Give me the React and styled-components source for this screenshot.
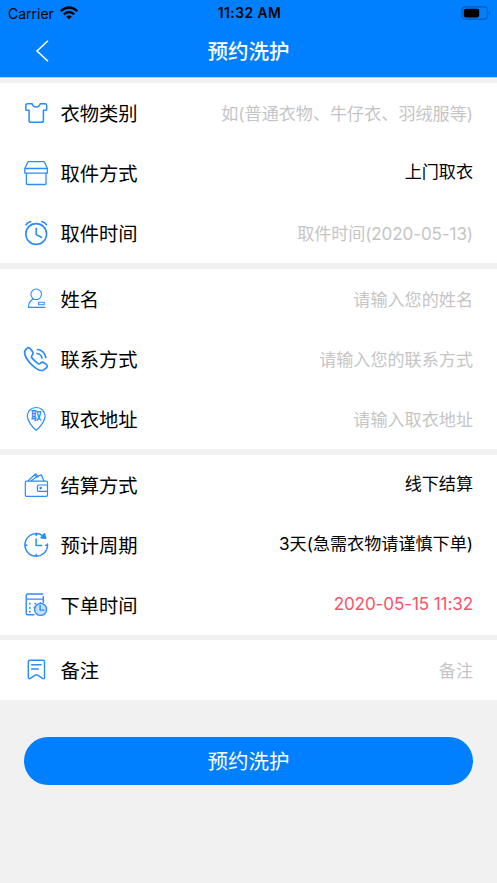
import React from "react";
import styled, { createGlobalStyle } from "styled-components";

const GlobalStyle = createGlobalStyle`
  * { box-sizing: border-box; }
  body {
    margin: 0;
    background: #f1f1f1;
    font-family: Inter, "Noto Sans CJK SC", sans-serif;
    color: #000;
  }
`;

const Screen = styled.main`
  display: flex;
  flex-direction: column;
  width: 497px;
  height: 883px;
  background: #f1f1f1;
  overflow: hidden;
`;

const Header = styled.header`
  display: flex;
  flex-direction: column;
  height: 78px;
  background: #0080ff;
  border-bottom: 1px solid #b9cfe6;
`;

const StatusBar = styled.div`
  display: grid;
  grid-template-columns: 1fr auto 1fr;
  align-items: center;
  height: 25px;
  padding: 0 6px 0 8px;
`;

const Carrier = styled.div`
  display: flex;
  align-items: center;
  gap: 6px;
  font-size: 14px;
  line-height: 25px;
`;

const Clock = styled.div`
  padding-top: 1px;
  font-size: 13.8px;
  font-weight: 600;
  line-height: 25px;
  letter-spacing: 0.5px;
`;

const Battery = styled.svg`
  justify-self: end;
`;

const NavBar = styled.div`
  display: grid;
  grid-template-columns: 80px 1fr 80px;
  align-items: center;
  height: 52px;
`;

const BackButton = styled.button`
  display: flex;
  padding: 0 0 0 35px;
  border: 0;
  background: none;
`;

const Title = styled.h1`
  margin: 0;
  padding-top: 2px;
  color: #fff;
  font-size: 20.5px;
  font-weight: 500;
  line-height: 50px;
  text-align: center;
`;

const Form = styled.form`
  display: flex;
  flex-direction: column;
  gap: 5.9px;
  padding-top: 5px;
`;

const Group = styled.section`
  background: #fff;
`;

const Row = styled.label`
  display: flex;
  align-items: center;
  height: 59.98px;
  padding: 0 24px;
`;

const Icon = styled.svg`
  width: 24px;
  height: 24px;
  flex: none;
  fill: none;
  stroke: #2b8cfb;
  stroke-width: ${(p) => p.$weight || 1.35};
  stroke-linecap: round;
  stroke-linejoin: round;
  overflow: visible;
`;

const PinText = styled.text`
  fill: #2b8cfb;
  stroke: none;
  font: 700 11px "Noto Sans CJK SC", sans-serif;
`;

const Label = styled.span`
  margin-left: 12.5px;
  padding-top: 2px;
  font-size: 19.3px;
  line-height: 28px;
`;

const tones = { hint: "#c5c5c5", plain: "#000", alert: "#fb5266" };

const Value = styled.span`
  margin-left: auto;
  color: ${(p) => tones[p.$tone]};
  font-size: 17.1px;
  line-height: 26px;
  letter-spacing: ${(p) => (p.$numeric ? "-0.12px" : "0")};
  padding-top: ${(p) => (p.$tone === "hint" ? 2 : 0)}px;
  padding-bottom: ${(p) => (p.$tone === "hint" ? 0 : 1)}px;
  white-space: nowrap;
`;

const Submit = styled.button`
  height: 48px;
  margin: 30.3px 24px 0;
  padding: 2px 0 0;
  border: 0;
  border-radius: 24px;
  background: #0080ff;
  color: #fff;
  font: 400 20.5px/46px Inter, "Noto Sans CJK SC", sans-serif;
`;

const icons = {
  shirt: (
    <Icon $weight={1.5}>
      <path d="M3.2 2.7H8.2C9 7.1 15.3 7.1 16.2 2.7H21Q22.7 2.7 22.7 4.4V8.4Q22.7 9.2 21.7 9.2H19.4V19.4Q19.4 21.3 17.5 21.3H7Q5.1 21.3 5.1 19.4V9.2H2.8Q1.8 9.2 1.8 8.4V4.4Q1.8 2.7 3.2 2.7Z" />
    </Icon>
  ),
  shop: (
    <Icon $weight={1.3}>
      <path d="M5.2.6H19.2Q20.2.6 20.6 1.5L23.4 7.5V12.2H.8V7.5L3.6 1.5Q4 .6 5.2.6ZM.8 7.5H23.4M2.4 12.2V22.5Q2.4 23.5 3.4 23.5H21Q22 23.5 22 22.5V12.2" />
    </Icon>
  ),
  alarm: (
    <Icon $weight={1.6}>
      <circle cx="12.2" cy="13" r="10.4" />
      <path d="M12.2 7.4V13.6L17.4 16.3M2 3.7Q3.8 1.3 6.7.5M22.5 3.7Q20.7 1.3 17.8.5" />
    </Icon>
  ),
  person: (
    <Icon $weight={1.1}>
      <circle cx="12.2" cy="7.3" r="5.3" />
      <path d="M9.2 12Q4.4 14.5 4.4 20.4H21M14.6 15.3H20.2V17.8H14.6Z" />
    </Icon>
  ),
  phone: (
    <Icon $weight={1.7}>
      <path d="M4.5.7C3.4.5.5 3.1.6 5.6C.8 9.2 4 14.4 8.7 18.6C12.2 21.9 16.3 24.3 19.1 23.2C21.1 22.5 23.5 20 23.3 18.9C23.1 17.6 20 15.4 18.4 15.2C17 15.1 16 17.2 14.8 17C13.5 16.7 7.8 11.5 7.5 10C7.2 8.7 9.2 7.6 9.1 6.2C8.9 4.4 6 .9 4.5.7ZM13.5 2.5Q20.2 3.2 21.8 10.5M13 6.5Q17.1 7.1 18 11" />
    </Icon>
  ),
  pin: (
    <Icon $weight={1.2}>
      <path d="M12.2.5C7.1.5 3.3 4.3 3.3 9.1C3.3 14.1 8.4 20.2 12.2 23.3C16 20.2 21.1 14.1 21.1 9.1C21.1 4.3 17.3.5 12.2.5Z" />
      <PinText x="12.2" y="13.2" textAnchor="middle">取</PinText>
    </Icon>
  ),
  wallet: (
    <Icon $weight={1.2}>
      <rect x="1.3" y="8.2" width="22.2" height="15.2" rx="1.3" />
      <path d="M4.2 7.8L11.7.8L14.2 3.5M7.5 7.8L12.8 3.6L17.4 1.8L19.7 7.8M10.7 1.9L13 4.3M23.5 12H14.5Q13.4 12 13.4 13V17.3Q13.4 18.3 14.5 18.3H23.5" />
      <circle cx="16.7" cy="15.1" r=".7" fill="#2b8cfb" />
    </Icon>
  ),
  cycle: (
    <Icon $weight={1.5}>
      <path d="M18.6 2.6A11.3 11.3 0 1 0 23.5 11.1M12.1 6V12.5H17.6M12.2 1V2.4M12.2 21.6V23M1.1 12.3H3M21.6 12.3H23.3" />
      <path d="M20.4.7L17 4.7L21.8 5.2Z" fill="#2b8cfb" />
    </Icon>
  ),
  order: (
    <Icon $weight={1.4}>
      <path d="M18.8 1H3.7Q2.2 1 2.2 2.5V20.2Q2.2 21.8 3.7 21.8H10M2.2 6.1H19.3M19.3 3.5V9.5" />
      <path d="M5.8 10.7H6M11.2 10.7H11.4M16.3 10.1H16.5M5.8 14.9H6M10.3 14.4H10.5M5.8 18.7H6" strokeWidth="1.7" />
      <circle cx="16.6" cy="16.4" r="6" fill="#c4dffd" />
      <path d="M16.1 12.4V17.1H20.1" />
    </Icon>
  ),
  note: (
    <Icon $weight={1.4}>
      <path d="M5.8 2.3H19Q20.5 2.3 20.5 3.8V19.3C20.5 20.7 19.5 21.1 18.4 20.3L13.7 17.2Q12.4 16.4 11.1 17.2L6.4 20.3C5.3 21.1 4.3 20.7 4.3 19.3V3.8Q4.3 2.3 5.8 2.3ZM7.6 6.8H17.1M7.6 11H14.4" />
    </Icon>
  ),
};

const groups = [
  [
    { icon: "shirt", label: "衣物类别", value: "如(普通衣物、牛仔衣、羽绒服等)", tone: "hint" },
    { icon: "shop", label: "取件方式", value: "上门取衣", tone: "plain" },
    { icon: "alarm", label: "取件时间", value: "取件时间(2020-05-13)", tone: "hint", numeric: true },
  ],
  [
    { icon: "person", label: "姓名", value: "请输入您的姓名", tone: "hint" },
    { icon: "phone", label: "联系方式", value: "请输入您的联系方式", tone: "hint" },
    { icon: "pin", label: "取衣地址", value: "请输入取衣地址", tone: "hint" },
  ],
  [
    { icon: "wallet", label: "结算方式", value: "线下结算", tone: "plain" },
    { icon: "cycle", label: "预计周期", value: "3天(急需衣物请谨慎下单)", tone: "plain" },
    { icon: "order", label: "下单时间", value: "2020-05-15 11:32", tone: "alert", numeric: true },
  ],
  [{ icon: "note", label: "备注", value: "备注", tone: "hint" }],
];

export default function App() {
  return (
    <>
      <GlobalStyle />
      <Screen>
        <Header>
          <StatusBar>
            <Carrier>
              Carrier
              <svg width="18" height="14" viewBox="0 0 18 14" fill="none" stroke="#000" strokeWidth="2.3">
                <path d="M.8 5.1Q9-2 17.2 5.1M3.8 8.3Q9 3.7 14.2 8.3" />
                <path d="M6.2 10.6Q9 8.4 11.8 10.6L9 13.5Z" fill="#000" stroke="none" />
              </svg>
            </Carrier>
            <Clock>11:32 AM</Clock>
            <Battery width="30" height="14" viewBox="0 0 30 14">
              <rect x="1" y=".9" width="25.3" height="12.2" rx="3.4" fill="none" stroke="#055bb1" strokeWidth="1.1" />
              <rect x="2.8" y="2.7" width="15.4" height="8.7" rx="1.8" fill="#000" />
              <path d="M27.7 5V9.2Q29.1 8.6 29.1 7.1Q29.1 5.6 27.7 5Z" fill="#055bb1" />
            </Battery>
          </StatusBar>
          <NavBar>
            <BackButton type="button" aria-label="返回">
              <svg width="14" height="22" viewBox="0 0 14 22" fill="none" stroke="#fff" strokeWidth="1.5">
                <path d="M13 .8L2 11L13 21.2" />
              </svg>
            </BackButton>
            <Title>预约洗护</Title>
          </NavBar>
        </Header>
        <Form>
          {groups.map((rows, i) => (
            <Group key={i}>
              {rows.map((row) => (
                <Row key={row.label}>
                  {icons[row.icon]}
                  <Label>{row.label}</Label>
                  <Value $tone={row.tone} $numeric={row.numeric}>{row.value}</Value>
                </Row>
              ))}
            </Group>
          ))}
          <Submit type="button">预约洗护</Submit>
        </Form>
      </Screen>
    </>
  );
}
